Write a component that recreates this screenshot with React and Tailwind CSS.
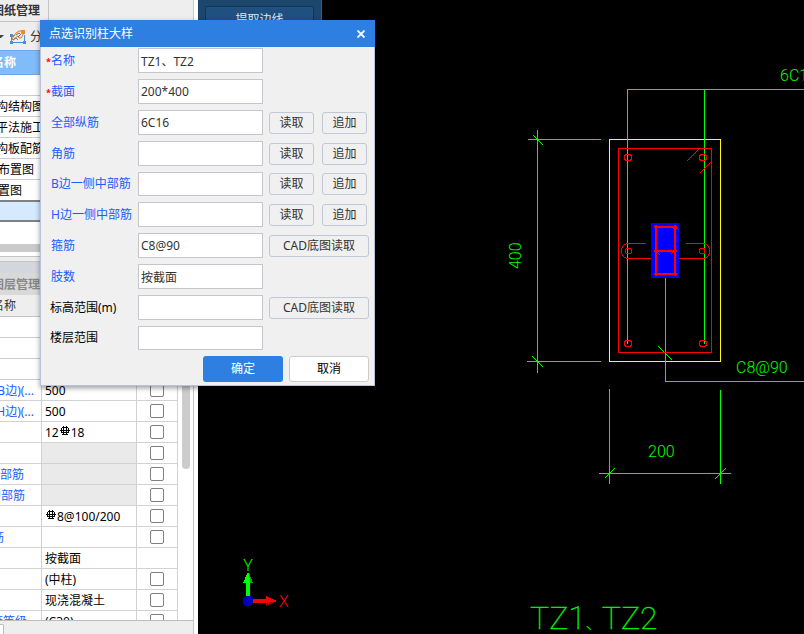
import React from "react";

const drawings = ["", "构结构图", "平法施工", "构板配筋", "布置图", "置图"];

const properties = [
  { name: "(B边)(...", end: "w-[34px]", value: "500", check: true },
  { name: "(H边)(...", end: "w-[34px]", value: "500", check: true },
  { value: "12#18", check: true },
  { muted: true, check: true },
  { name: "中部筋", end: "w-6", muted: true, check: true },
  { name: "中部筋", end: "w-[25px]", muted: true, check: true },
  { value: "#8@100/200", check: true },
  { name: "箍筋", end: "w-1", value: "", check: true },
  { value: "按截面", check: false },
  { value: "(中柱)", check: true },
  { value: "现浇混凝土", check: true },
  { name: "强度等级", end: "w-[27px]", value: "(C30)", check: true },
];

const fields = [
  { id: "name", label: "名称", required: true, value: "TZ1、TZ2" },
  { id: "section", label: "截面", required: true, value: "200*400" },
  { id: "all", label: "全部纵筋", value: "6C16", actions: "pair" },
  { id: "corner", label: "角筋", value: "", actions: "pair" },
  { id: "bside", label: "B边一侧中部筋", value: "", actions: "pair", short: true },
  { id: "hside", label: "H边一侧中部筋", value: "", actions: "pair" },
  { id: "stirrup", label: "箍筋", value: "C8@90", actions: "cad" },
  { id: "legs", label: "肢数", value: "按截面" },
  { id: "elevation", label: "标高范围(m)", value: "", actions: "cad", plain: true },
  { id: "floors", label: "楼层范围", value: "", plain: true, short: true },
];

function RebarMark() {
  return (
    <svg className="mx-px mb-1.5 inline-block" width="10" height="10" viewBox="0 0 10 10" fill="none" stroke="#000" shapeRendering="crispEdges">
      <path d="M2 1.5H8M1.5 2V7M8.500 2V7M2 6.5H8M0 4.5H10M3.5 0V9M6.5 0V9M2 8.5H8" />
    </svg>
  );
}

function Value({ text }) {
  if (!text || !text.includes("#")) return <>{text}</>;
  const [before, after] = text.split("#");
  return (
    <>
      {before}
      <RebarMark />
      {after}
    </>
  );
}

function PickIcon() {
  return (
    <svg width="18" height="16" viewBox="0 0 18 16" fill="none">
      <path d="M2.5 5V14M15.5 6V14M1 13.5H17M1 6.5H6" stroke="#4b8fd0" />
      <path d="M1 12h3v3H1zM14 12h3v3h-3zM1 5h3v3H1z" fill="#4b8fd0" />
      <path d="M3 10L7 4L10 2H14V6L12 9H10L9 7L4 11Z" fill="#fbe0c4" stroke="#e87a22" />
      <path d="M7 6L10 4L12 6M9 8L12 5M4 11L7 9L9 11" stroke="#777" />
      <path d="M12 1h4v4h-4z" fill="#f08a30" />
    </svg>
  );
}

function SidePanel() {
  return (
    <aside className="flex w-[194px] shrink-0 flex-col overflow-hidden border-r border-[#c8c8c8] bg-[#eeeeee] text-black">
      <div className="flex h-[22px] shrink-0 border-b border-[#c4c4c4]">
        <div className="flex w-[49px] items-center border-r border-[#c4c4c4] font-bold whitespace-nowrap text-[#333]">
          <span className="-ml-2">图纸管理</span>
        </div>
      </div>
      <div className="flex h-7 shrink-0 items-center pt-px text-[#333]">
        <svg width="4" height="4" viewBox="0 0 4 4"><path d="M0 0H4L1 3H0Z" fill="#444" /></svg>
        <span className="ml-[5px]"><PickIcon /></span>
        <span className="ml-[3px]">分</span>
      </div>
      <div className="flex h-[25px] shrink-0 items-center border-y border-[#6fa8e6] bg-[#80bbfa] font-bold text-white">
        <span className="-ml-2">名称</span>
      </div>
      <ul className="shrink-0 bg-white">
        {drawings.map((d, i) => (
          <li key={i} className="flex h-[21px] items-center border-b border-[#cccccc] pt-0.5 whitespace-nowrap">
            <span className={i > 3 ? "-ml-0.5" : "-ml-1"}>{d}</span>
          </li>
        ))}
        <li className="-mt-px h-[22px] border-y-2 border-[#808080] bg-[#d5e9ff]" />
      </ul>
      <div className="flex h-[35px] shrink-0 flex-col justify-end border-b border-[#c4c4c4] bg-white pb-1">
        <div className="h-2 bg-[#cacaca]" />
      </div>
      <div className="mt-1 h-3 shrink-0 border-t border-[#c4c4c4] bg-[#d3d6dd]" />
      <div className="flex h-[22px] shrink-0 items-center bg-[#d9d9d9] pt-px font-bold text-[#888]">
        <span className="-ml-2">图层管理</span>
      </div>
      <div className="flex h-[22px] shrink-0 items-center border-b border-[#c4c4c4] pt-px text-[#333]">
        <span className="-ml-2">名称</span>
      </div>
      <div className="shrink-0 bg-white">
        <div className="h-[21px] border-b border-[#cccccc]" />
        <div className="h-[21px] border-b border-[#cccccc]" />
        <div className="h-[21px] border-b border-[#cccccc]" />
      </div>
      <div className="flex min-h-0 flex-1 overflow-hidden border-b border-[#bdbdbd] bg-white">
        <table className="w-[178px] shrink-0 table-fixed border-separate border-spacing-0 self-start">
          <colgroup>
            <col className="w-[42px]" />
            <col className="w-[95px]" />
            <col className="w-[41px]" />
          </colgroup>
          <tbody>
            {properties.map((p, i) => (
              <tr key={i} className="h-[21px]">
                <td className="h-[21px] border-r border-b border-[#d2d2d2] p-0 text-[#1a5cff]">
                  {p.name && (
                    <div className={`flex h-5 items-center justify-end overflow-hidden pt-px whitespace-nowrap ${p.end}`}>{p.name}</div>
                  )}
                </td>
                <td className={`h-[21px] border-r border-b border-[#d2d2d2] p-0 pl-[3px] ${p.muted ? "bg-[#eaeaea]" : ""}`}>
                  <div className="h-5 leading-[21px] whitespace-nowrap"><Value text={p.value} /></div>
                </td>
                <td className="h-[21px] border-r border-b border-[#d2d2d2] p-0">
                  <div className="flex h-5 items-center justify-center">
                    {p.check && (
                      <input type="checkbox" aria-label="附加" className="size-3.5 appearance-none rounded-xs border border-[#808080] bg-white" />
                    )}
                  </div>
                </td>
              </tr>
            ))}
          </tbody>
        </table>
        <div className="ml-1 h-[89px] w-2 rounded-b-full bg-[#cccccc]" />
      </div>
      <div className="flex h-[13px] shrink-0 items-end">
        <div className="h-2.5 w-1 rounded-tr-xs border-t border-r border-[#bdbdbd] bg-white" />
      </div>
    </aside>
  );
}

const G = "#00ff00";

function Drawing() {
  return (
    <svg className="block shrink-0" width="606" height="634" viewBox="198 0 606 634" fill="none" shapeRendering="crispEdges">
      <rect x="609.5" y="139.5" width="111" height="222" stroke="#ffff00" />
      <g stroke={G}>
        <path d="M627.5 344V89.5H804M704.5 89V344" />
        <path d="M537.5 130V373M528 139.5H601M527 361.5H601M533 135L543 145M532 356L543 367" />
        <path d="M665.5 278V381.5H804M658 346L672 360" />
        <path d="M609.5 389V484M720.5 390V484M599 473.5H731M605 478L615 468M715 479L726 468" />
      </g>
      <g stroke="#ff0000">
        <rect x="618.5" y="148.5" width="93" height="204" />
        <circle cx="628" cy="157.500" r="3.500" />
        <circle cx="703" cy="157.500" r="3.500" />
        <circle cx="628" cy="343.500" r="3.500" />
        <circle cx="703" cy="343.500" r="3.500" />
        <circle cx="628.500" cy="251" r="3" />
        <path d="M704.500 248.500H700.500L699.500 249.500V252.500L700.500 253.500H704.500Z" />
        <path d="M687 161L699 149M700 173L711 162" />
        <path d="M646 243.500H627.500C623.500 244.500 621.500 247 621.500 251C621.500 255 623.500 257.500 627.500 258.500H651" />
        <path d="M686 243.500H704.500C708 244.500 709.500 247 709.500 251C709.500 255 708 257.500 704.500 258.500H679" />
      </g>
      <rect x="651" y="223" width="28" height="55" fill="#0000ff" />
      <path d="M656 225V276M675 225V276M654 227H677M654 251H677M654 274H677M673 228H677" stroke="#ff0000" strokeWidth="2" />
      <path d="M657 252L660 255M671 254L675 250" stroke="#ff0000" />
      <g fill={G} fontFamily="Roboto, 'Liberation Sans', sans-serif" fontWeight="300" fontSize="16">
        <text x="780" y="81">6C16</text>
        <text x="736" y="373">C8@90</text>
        <text x="648" y="457">200</text>
        <text x="0" y="0" transform="translate(521 269) rotate(-90)">400</text>
        <text x="530" y="629" fontSize="32" fontWeight="100" stroke={G} strokeWidth="0.300">TZ1<tspan fontSize="16" fontFamily="'Noto Sans CJK SC', sans-serif">、</tspan>TZ2</text>
      </g>
      <path d="M246 598V583H243L248 572L253 583H250V598Z" fill={G} />
      <path d="M250 583H253L249 573Z" fill="#00b000" />
      <path d="M251 599H266V596L277 601L266 606V603H251Z" fill="#ff0000" />
      <path d="M266 603V606L276 601.500Z" fill="#b00000" />
      <circle cx="248" cy="601" r="5.500" fill="#0000c0" />
      <g fontFamily="Roboto, 'Liberation Sans', sans-serif" fontSize="16" fontWeight="300">
        <text x="248" y="571" textAnchor="middle" fill={G}>Y</text>
        <text x="284" y="607" textAnchor="middle" fill="#ff0000">X</text>
      </g>
    </svg>
  );
}

function SmallButton({ children, wide }) {
  return (
    <button type="button" className={`h-[22px] rounded-[3px] border border-[#c0c8d8] bg-[#f0f0f0] text-[#333] ${wide ? "w-[100px]" : "w-[45px]"}`}>
      {children}
    </button>
  );
}

function PickDialog() {
  return (
    <form role="dialog" aria-labelledby="dialog-title" className="absolute top-5 left-10 w-[335px] bg-[#f0f0f0] text-[#333] shadow-[0_2px_5px_rgba(0,0,0,0.4)]">
      <header className="flex h-[27px] items-center justify-between bg-[#2d80e2] pr-2.5 pl-[9px] text-white">
        <h1 id="dialog-title">点选识别柱大样</h1>
        <button type="button" aria-label="关闭" className="flex size-2 items-center justify-center">
          <svg className="shrink-0" width="8" height="8" viewBox="0 0 8 8" stroke="#fff" strokeWidth="1.800"><path d="M.5 .5L7.500 7.500M7.500 .5L.5 7.500" /></svg>
        </button>
      </header>
      <div className="border-x border-b border-[#b9c3d8] pt-px pb-[3px]">
        <div className="flex flex-col gap-1.5">
          {fields.map((f) => (
            <div key={f.id} className={`flex items-center ${f.short ? "h-6" : "h-[25px]"}`}>
              <label htmlFor={f.id} className={`w-[97px] shrink-0 whitespace-nowrap ${f.plain ? "pl-[9px] text-black" : f.required ? "pl-[5px] text-[#1a5cff]" : "pl-2.5 text-[#1a5cff]"}`}>
                {f.required && <span className="text-[9px] font-bold text-[#ff0000]">*</span>}
                {f.label}
              </label>
              <input id={f.id} type="text" defaultValue={f.value} className="h-full w-[125px] border border-[#c4c6cc] bg-white px-0.5 outline-none" />
              <div className="ml-1.5 flex gap-2">
                {f.actions === "pair" && (
                  <>
                    <SmallButton>读取</SmallButton>
                    <SmallButton>追加</SmallButton>
                  </>
                )}
                {f.actions === "cad" && <SmallButton wide>CAD底图读取</SmallButton>}
              </div>
            </div>
          ))}
        </div>
        <div className="mt-1.5 flex justify-end gap-1.5 pr-[5px]">
          <button type="submit" className="h-[26px] w-20 rounded-[3px] bg-[#2d80e2] text-white">确定</button>
          <button type="button" className="h-[26px] w-20 rounded-[3px] border border-[#cccccc] bg-white text-black">取消</button>
        </div>
      </div>
    </form>
  );
}

export default function App() {
  return (
    <div className="relative flex h-screen overflow-hidden bg-white font-['Noto_Sans','Noto_Sans_CJK_SC',sans-serif] text-xs">
      <SidePanel />
      <main className="relative ml-1 flex-1 overflow-hidden bg-black">
        <Drawing />
        <div className="absolute top-0 left-0 w-[124px] border-r border-[#2a6297] bg-[#1d466c] px-[7px] pt-1.5">
          <button type="button" className="h-6 w-full rounded-xs border border-[#14344f] bg-[#205080] pt-[3px] text-[#dce8f4]">提取边线</button>
        </div>
      </main>
      <PickDialog />
    </div>
  );
}
